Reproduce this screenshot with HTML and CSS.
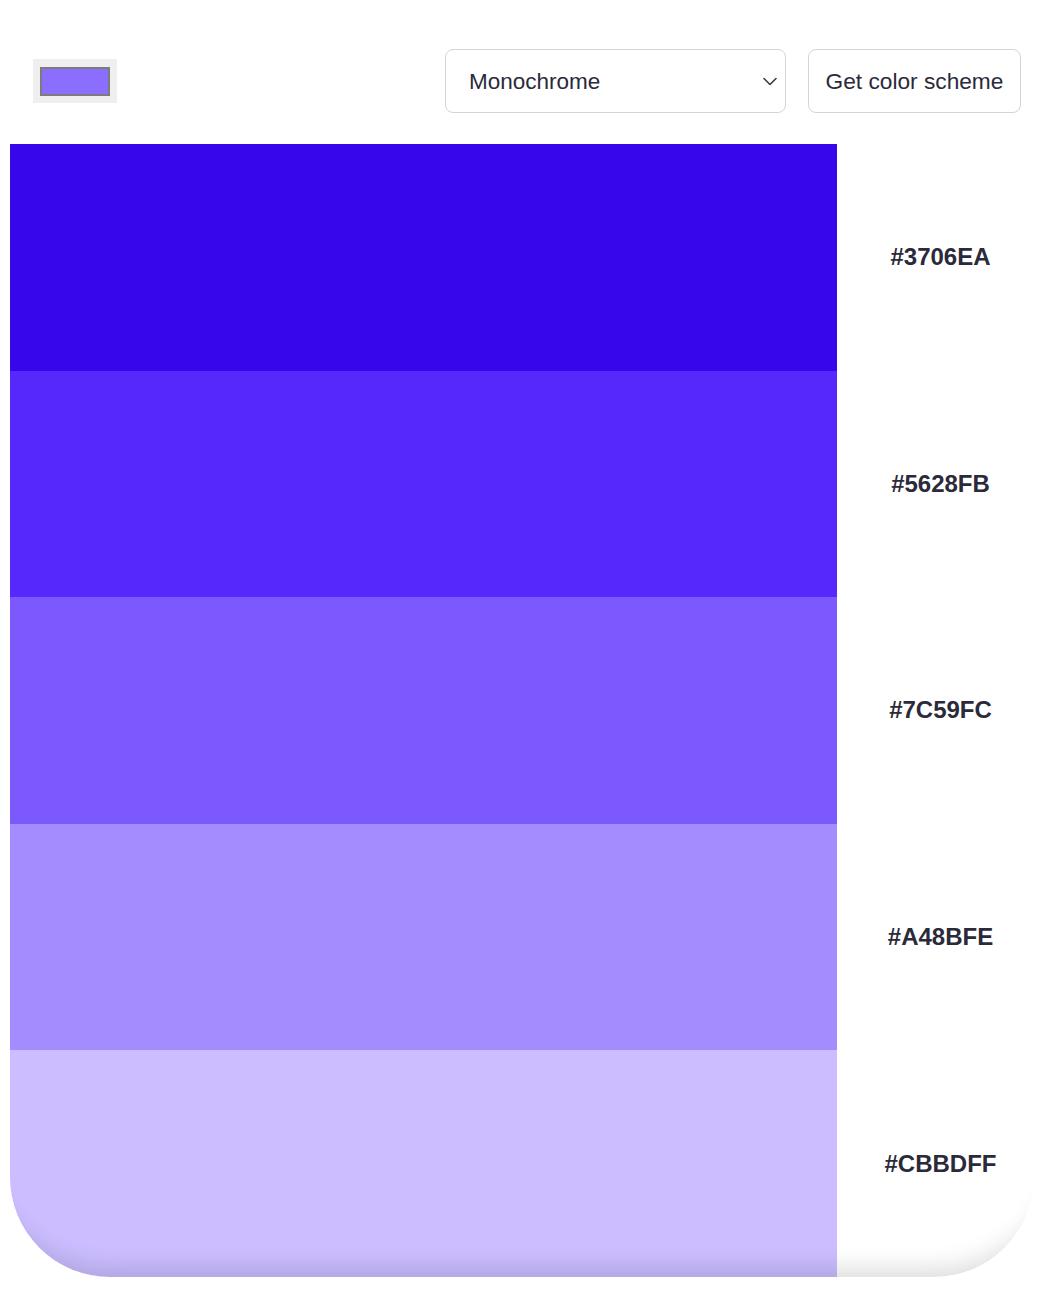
FILE: index.html
```html
<!DOCTYPE html>
<html lang="en">
<head>
<meta charset="utf-8">
<title>Color scheme</title>
<link rel="stylesheet" href="styles.css">
</head>
<body>
<main class="app">
  <header class="toolbar">
    <div class="color-input"><span class="swatch"></span></div>
    <div class="controls">
      <div class="select">
        <span class="select-label">Monochrome</span>
        <svg class="chevron" width="14" height="9" viewBox="0 0 14 9"><path d="M1 1.5 L7 7.5 L13 1.5" fill="none" stroke="#3a3a46" stroke-width="1.6" stroke-linecap="round" stroke-linejoin="round"/></svg>
      </div>
      <button class="btn" type="button">Get color scheme</button>
    </div>
  </header>
  <section class="scheme">
    <div class="row"><div class="color" style="background:#3706EA"></div><div class="hex">#3706EA</div></div>
    <div class="row"><div class="color" style="background:#5628FB"></div><div class="hex">#5628FB</div></div>
    <div class="row"><div class="color" style="background:#7C59FC"></div><div class="hex">#7C59FC</div></div>
    <div class="row"><div class="color" style="background:#A48BFE"></div><div class="hex">#A48BFE</div></div>
    <div class="row"><div class="color" style="background:#CBBDFF"></div><div class="hex">#CBBDFF</div></div>
  </section>
</main>
</body>
</html>
```
FILE: styles.css
```css
html, body {
  margin: 0;
  padding: 0;
  background: #ffffff;
}
body {
  font-family: "Liberation Sans", Arial, sans-serif;
  color: #2b2a3a;
}
.app {
  width: 1024px;
  margin-left: 10px;
}
.toolbar {
  height: 144px;
  box-sizing: border-box;
  padding: 49px 13px 31px 23px;
  display: flex;
  align-items: center;
  justify-content: space-between;
}
.color-input {
  width: 84px;
  height: 44px;
  background: #efefef;
  display: flex;
  align-items: center;
  justify-content: center;
}
.swatch {
  width: 66px;
  height: 25px;
  background: #8c6eff;
  border: 2px solid #7b7b7b;
}
.controls {
  display: flex;
  gap: 22px;
  height: 64px;
}
.select {
  width: 341px;
  box-sizing: border-box;
  border: 1.5px solid #d4d4d8;
  border-radius: 8px;
  padding: 0 8px 0 23px;
  display: flex;
  align-items: center;
  justify-content: space-between;
  background: #fff;
}
.select-label {
  font-size: 22.5px;
  color: #2b2a3a;
  padding-top: 2px;
}
.btn {
  width: 213px;
  box-sizing: border-box;
  border: 1.5px solid #d4d4d8;
  border-radius: 8px;
  background: #fff;
  font-family: "Liberation Sans", Arial, sans-serif;
  font-size: 22.7px;
  color: #2b2a3a;
  padding: 0;
}
.scheme {
  position: relative;
  height: 1133px;
  display: grid;
  grid-template-rows: repeat(5, 1fr);
  border-radius: 0 0 100px 100px;
  overflow: hidden;
}
.scheme::after {
  content: "";
  position: absolute;
  inset: 0;
  border-radius: inherit;
  box-shadow: inset 0 -40px 24px -32px rgba(0, 0, 0, 0.14);
  pointer-events: none;
}
.row {
  display: grid;
  grid-template-columns: 827px 1fr;
}
.hex {
  display: flex;
  align-items: center;
  justify-content: center;
  padding-left: 10px;
  font-size: 24px;
  font-weight: 700;
  color: #2b2a3a;
}
```
